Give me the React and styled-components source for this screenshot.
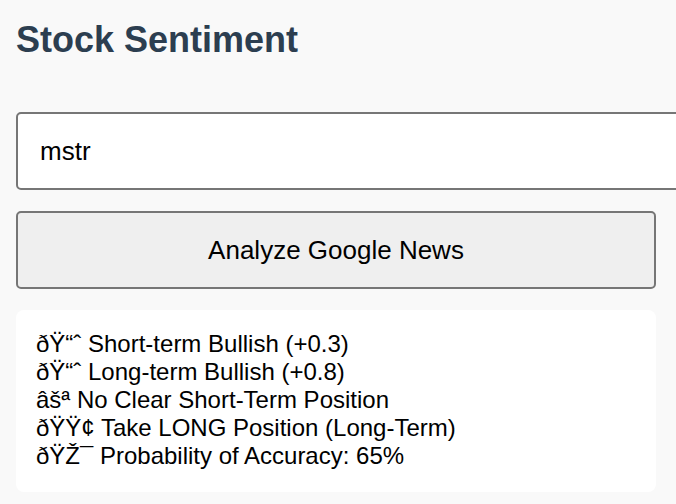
import React from "react";
import styled, { createGlobalStyle } from "styled-components";

const Global = createGlobalStyle`
  html, body { margin: 0; padding: 0; overflow: hidden; }
  body {
    background: #f9f9f9;
    font-family: "Liberation Sans", Arial, Helvetica, sans-serif;
    color: #000;
  }
`;

const Page = styled.main`
  max-width: 640px;
  padding: 19px 16px 16px;
  display: flex;
  flex-direction: column;
`;

const Title = styled.h1`
  margin: 0 0 51px;
  font-size: 36px;
  font-weight: 700;
  color: #2c3e50;
  line-height: normal;
`;

const Input = styled.input`
  box-sizing: border-box;
  width: 700px;
  height: 78px;
  margin: 0 0 21px;
  padding: 0 22px;
  border: 2px solid #767676;
  border-radius: 5px;
  background: #fff;
  font-family: inherit;
  font-size: 26px;
  color: #000;
  outline: none;
`;

const Button = styled.button`
  box-sizing: border-box;
  width: 100%;
  height: 78px;
  margin: 0 0 21px;
  border: 2px solid #767676;
  border-radius: 5px;
  background: #efefef;
  font-family: inherit;
  font-size: 26px;
  color: #000;
`;

const Results = styled.section`
  background: #fff;
  border-radius: 8px;
  padding: 20px 20px 22px;
  font-size: 24px;
  line-height: normal;
`;

const Line = styled.div``;

const lines = [
  "ðŸ“ˆ Short-term Bullish (+0.3)",
  "ðŸ“ˆ Long-term Bullish (+0.8)",
  "âšª No Clear Short-Term Position",
  "ðŸŸ¢ Take LONG Position (Long-Term)",
  "ðŸŽ¯ Probability of Accuracy: 65%",
];

export default function App() {
  return (
    <>
      <Global />
      <Page>
        <Title>Stock Sentiment</Title>
        <Input defaultValue="mstr" />
        <Button>Analyze Google News</Button>
        <Results>
          {lines.map((l, i) => (
            <Line key={i}>{l}</Line>
          ))}
        </Results>
      </Page>
    </>
  );
}
